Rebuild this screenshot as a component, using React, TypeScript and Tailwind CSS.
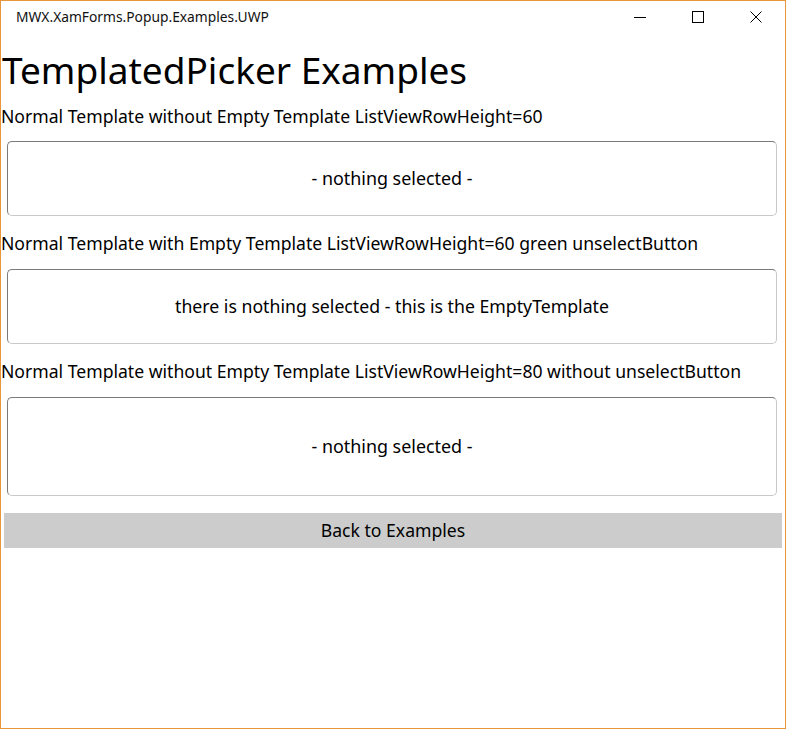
export default function App() {
  const font = { fontFamily: '"Noto Sans", "Open Sans", sans-serif' };
  return (
    <div
      className="w-[786px] h-[729px] border border-[#e8953c] bg-white flex flex-col text-black overflow-hidden"
      style={font}
    >
      {/* TITLE BAR */}
      <div className="h-[31px] flex items-center shrink-0">
        <span className="pl-[15px] text-[13.8px] leading-none text-[#111]">MWX.XamForms.Popup.Examples.UWP</span>
        <div className="ml-auto flex h-full">
          <div className="w-[58px] flex items-center justify-center">
            <svg width="12" height="12" viewBox="0 0 12 12">
              <path d="M0 6.5h12" stroke="#000" strokeWidth="1" />
            </svg>
          </div>
          <div className="w-[58px] flex items-center justify-center">
            <svg width="12" height="12" viewBox="0 0 12 12">
              <rect x="0.5" y="0.5" width="11" height="11" fill="none" stroke="#000" strokeWidth="1" />
            </svg>
          </div>
          <div className="w-[58px] flex items-center justify-center">
            <svg width="12" height="12" viewBox="0 0 12 12">
              <path d="M0.5 0.5l11 11M11.5 0.5l-11 11" stroke="#000" strokeWidth="1" />
            </svg>
          </div>
        </div>
      </div>

      {/* CONTENT */}
      <h1 className="mt-[14px] h-[48px] leading-[48px] text-[37px] font-normal pl-[1px] whitespace-nowrap">
        TemplatedPicker Examples
      </h1>

      <p className="mt-[10px] h-[24px] leading-[24px] text-[17.6px] whitespace-nowrap">
        Normal Template without Empty Template ListViewRowHeight=60
      </p>
      <div className="mt-[13px] ml-[6px] mr-[8px] h-[75px] rounded-[5px] border border-t-[#7a7a7a] border-l-[#7a7a7a] border-r-[#c8c8c8] border-b-[#c8c8c8] flex items-center justify-center text-[17.9px]">
        - nothing selected -
      </div>

      <p className="mt-[15px] h-[24px] leading-[24px] text-[17.6px] whitespace-nowrap">
        Normal Template with Empty Template ListViewRowHeight=60 green unselectButton
      </p>
      <div className="mt-[14px] ml-[6px] mr-[8px] h-[75px] rounded-[5px] border border-t-[#7a7a7a] border-l-[#7a7a7a] border-r-[#c8c8c8] border-b-[#c8c8c8] flex items-center justify-center text-[17.7px]">
        there is nothing selected - this is the EmptyTemplate
      </div>

      <p className="mt-[15px] h-[24px] leading-[24px] text-[17.6px] whitespace-nowrap">
        Normal Template without Empty Template ListViewRowHeight=80 without unselectButton
      </p>
      <div className="mt-[14px] ml-[6px] mr-[8px] h-[99px] rounded-[5px] border border-t-[#7a7a7a] border-l-[#7a7a7a] border-r-[#c8c8c8] border-b-[#c8c8c8] flex items-center justify-center text-[17.9px]">
        - nothing selected -
      </div>

      <button className="mt-[17px] mx-[3px] h-[35px] bg-[#cccccc] text-[17.6px] flex items-center justify-center">
        Back to Examples
      </button>
    </div>
  );
}
